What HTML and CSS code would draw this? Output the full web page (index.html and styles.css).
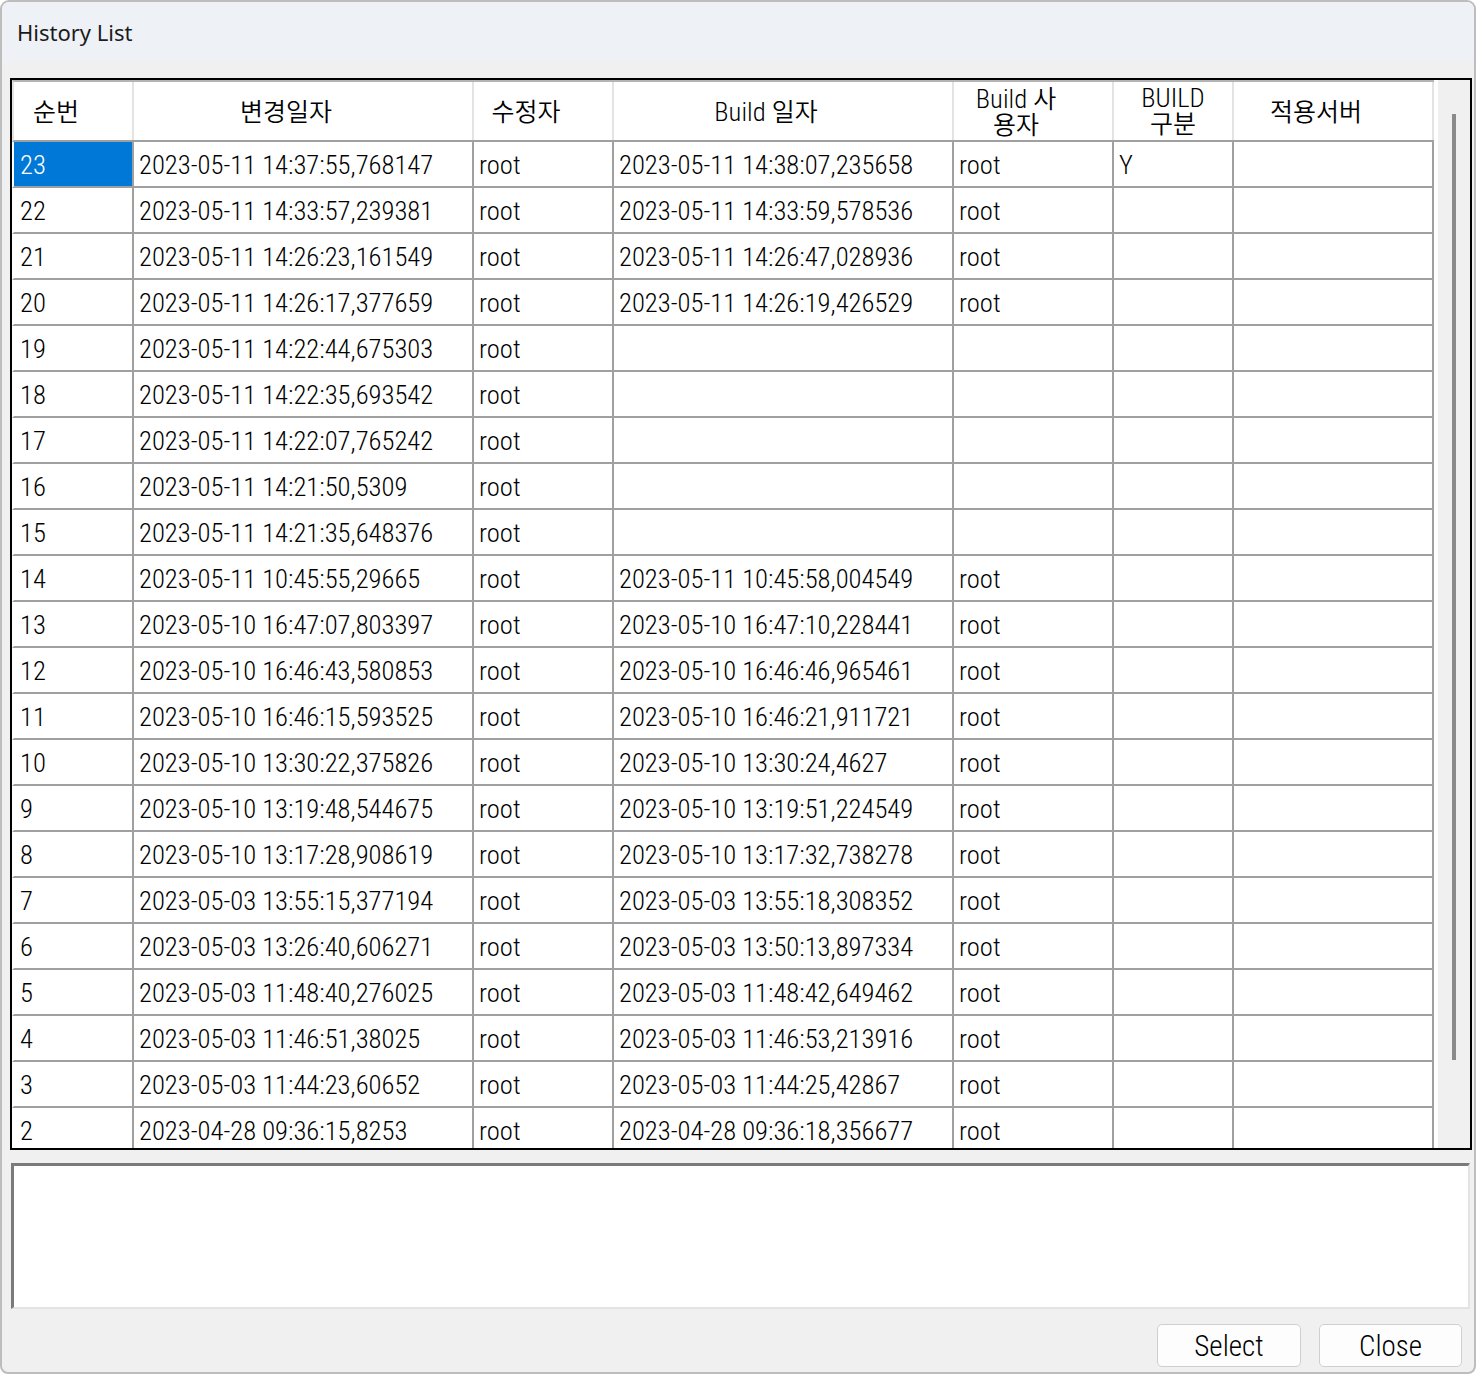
FILE: index.html
```html
<!DOCTYPE html>
<html lang="ko">
<head>
<meta charset="utf-8">
<title>History List</title>
<link rel="stylesheet" href="styles.css">
</head>
<body>
<div class="window">
  <div class="titlebar">History List</div>
  <div class="content">
    <div class="frame">
      <div class="grid">
        <div class="head">
          <div class="hc"><span class="ht"><span class="ko">순번</span></span></div>
          <div class="hc"><span class="ht"><span class="ko">변경일자</span></span></div>
          <div class="hc"><span class="ht"><span class="ko">수정자</span></span></div>
          <div class="hc"><span class="ht">Build <span class="ko">일자</span></span></div>
          <div class="hc"><span class="ht">Build <span class="ko">사</span><br><span class="ko">용자</span></span></div>
          <div class="hc hc-center"><span class="ht">BUILD<br><span class="ko">구분</span></span></div>
          <div class="hc"><span class="ht"><span class="ko">적용서버</span></span></div>
        </div>
        <div class="body">
          <div class="row"><div class="cell c1 sel">23</div><div class="cell">2023-05-11 14:37:55,768147</div><div class="cell">root</div><div class="cell">2023-05-11 14:38:07,235658</div><div class="cell">root</div><div class="cell">Y</div><div class="cell"></div></div>
          <div class="row"><div class="cell c1">22</div><div class="cell">2023-05-11 14:33:57,239381</div><div class="cell">root</div><div class="cell">2023-05-11 14:33:59,578536</div><div class="cell">root</div><div class="cell"></div><div class="cell"></div></div>
          <div class="row"><div class="cell c1">21</div><div class="cell">2023-05-11 14:26:23,161549</div><div class="cell">root</div><div class="cell">2023-05-11 14:26:47,028936</div><div class="cell">root</div><div class="cell"></div><div class="cell"></div></div>
          <div class="row"><div class="cell c1">20</div><div class="cell">2023-05-11 14:26:17,377659</div><div class="cell">root</div><div class="cell">2023-05-11 14:26:19,426529</div><div class="cell">root</div><div class="cell"></div><div class="cell"></div></div>
          <div class="row"><div class="cell c1">19</div><div class="cell">2023-05-11 14:22:44,675303</div><div class="cell">root</div><div class="cell"></div><div class="cell"></div><div class="cell"></div><div class="cell"></div></div>
          <div class="row"><div class="cell c1">18</div><div class="cell">2023-05-11 14:22:35,693542</div><div class="cell">root</div><div class="cell"></div><div class="cell"></div><div class="cell"></div><div class="cell"></div></div>
          <div class="row"><div class="cell c1">17</div><div class="cell">2023-05-11 14:22:07,765242</div><div class="cell">root</div><div class="cell"></div><div class="cell"></div><div class="cell"></div><div class="cell"></div></div>
          <div class="row"><div class="cell c1">16</div><div class="cell">2023-05-11 14:21:50,5309</div><div class="cell">root</div><div class="cell"></div><div class="cell"></div><div class="cell"></div><div class="cell"></div></div>
          <div class="row"><div class="cell c1">15</div><div class="cell">2023-05-11 14:21:35,648376</div><div class="cell">root</div><div class="cell"></div><div class="cell"></div><div class="cell"></div><div class="cell"></div></div>
          <div class="row"><div class="cell c1">14</div><div class="cell">2023-05-11 10:45:55,29665</div><div class="cell">root</div><div class="cell">2023-05-11 10:45:58,004549</div><div class="cell">root</div><div class="cell"></div><div class="cell"></div></div>
          <div class="row"><div class="cell c1">13</div><div class="cell">2023-05-10 16:47:07,803397</div><div class="cell">root</div><div class="cell">2023-05-10 16:47:10,228441</div><div class="cell">root</div><div class="cell"></div><div class="cell"></div></div>
          <div class="row"><div class="cell c1">12</div><div class="cell">2023-05-10 16:46:43,580853</div><div class="cell">root</div><div class="cell">2023-05-10 16:46:46,965461</div><div class="cell">root</div><div class="cell"></div><div class="cell"></div></div>
          <div class="row"><div class="cell c1">11</div><div class="cell">2023-05-10 16:46:15,593525</div><div class="cell">root</div><div class="cell">2023-05-10 16:46:21,911721</div><div class="cell">root</div><div class="cell"></div><div class="cell"></div></div>
          <div class="row"><div class="cell c1">10</div><div class="cell">2023-05-10 13:30:22,375826</div><div class="cell">root</div><div class="cell">2023-05-10 13:30:24,4627</div><div class="cell">root</div><div class="cell"></div><div class="cell"></div></div>
          <div class="row"><div class="cell c1">9</div><div class="cell">2023-05-10 13:19:48,544675</div><div class="cell">root</div><div class="cell">2023-05-10 13:19:51,224549</div><div class="cell">root</div><div class="cell"></div><div class="cell"></div></div>
          <div class="row"><div class="cell c1">8</div><div class="cell">2023-05-10 13:17:28,908619</div><div class="cell">root</div><div class="cell">2023-05-10 13:17:32,738278</div><div class="cell">root</div><div class="cell"></div><div class="cell"></div></div>
          <div class="row"><div class="cell c1">7</div><div class="cell">2023-05-03 13:55:15,377194</div><div class="cell">root</div><div class="cell">2023-05-03 13:55:18,308352</div><div class="cell">root</div><div class="cell"></div><div class="cell"></div></div>
          <div class="row"><div class="cell c1">6</div><div class="cell">2023-05-03 13:26:40,606271</div><div class="cell">root</div><div class="cell">2023-05-03 13:50:13,897334</div><div class="cell">root</div><div class="cell"></div><div class="cell"></div></div>
          <div class="row"><div class="cell c1">5</div><div class="cell">2023-05-03 11:48:40,276025</div><div class="cell">root</div><div class="cell">2023-05-03 11:48:42,649462</div><div class="cell">root</div><div class="cell"></div><div class="cell"></div></div>
          <div class="row"><div class="cell c1">4</div><div class="cell">2023-05-03 11:46:51,38025</div><div class="cell">root</div><div class="cell">2023-05-03 11:46:53,213916</div><div class="cell">root</div><div class="cell"></div><div class="cell"></div></div>
          <div class="row"><div class="cell c1">3</div><div class="cell">2023-05-03 11:44:23,60652</div><div class="cell">root</div><div class="cell">2023-05-03 11:44:25,42867</div><div class="cell">root</div><div class="cell"></div><div class="cell"></div></div>
          <div class="row"><div class="cell c1">2</div><div class="cell">2023-04-28 09:36:15,8253</div><div class="cell">root</div><div class="cell">2023-04-28 09:36:18,356677</div><div class="cell">root</div><div class="cell"></div><div class="cell"></div></div>
        </div>
      </div>
      <div class="gap"></div>
      <div class="track"><div class="thumb"></div></div>
    </div>
    <div class="memo"></div>
    <div class="buttons">
      <button class="btn btn-select">Select</button>
      <button class="btn btn-close">Close</button>
    </div>
  </div>
</div>
</body>
</html>
```

FILE: styles.css
```css
* { box-sizing: border-box; }
html, body { margin: 0; padding: 0; background: #ffffff; }
body { width: 1476px; height: 1374px; overflow: hidden; }

.window {
  width: 1476px;
  height: 1374px;
  border: 2px solid #bdbdbd;
  border-radius: 9px 9px 8px 8px;
  background: #f0f0f0;
  overflow: hidden;
  display: flex;
  flex-direction: column;
}

.titlebar {
  height: 60px;
  flex: none;
  background: #eef2f7;
  padding-left: 15px;
  font-family: "Noto Sans", sans-serif;
  font-size: 22px;
  line-height: 60px;
  color: #1b1b1b;
}

.content {
  flex: 1;
  display: flex;
  flex-direction: column;
  padding: 16px 2px 0 8px;
}

.frame {
  height: 1072px;
  flex: none;
  border: 2px solid #000;
  display: flex;
  background: #fff;
}

.grid {
  width: 1422px;
  flex: none;
  overflow: hidden;
  font-family: "Roboto", "Noto Sans CJK KR", sans-serif;
  font-stretch: 75%;
  font-weight: 350;
  font-size: 26.6px;
  color: #000;
}

.gap { width: 4px; flex: none; background: #fff; }

.track {
  width: 32px;
  flex: none;
  background: #f0f0f0;
  padding: 34px 0 0 14px;
}
.thumb { width: 4px; height: 946px; background: #8a8a8a; }

.head, .row {
  display: grid;
  grid-template-columns: 120px 340px 140px 340px 160px 120px 200px;
}

.head {
  height: 62px;
  border-top: 2px solid #b4b4b4;
  border-bottom: 2px solid #a0a0a0;
  border-left: 2px solid #e3e3e3;
}

.hc {
  border-right: 2px solid #e3e3e3;
  display: flex;
  align-items: center;
  justify-content: center;
  text-align: center;
  padding-right: 34px;
  line-height: 24px;
}
.hc-center { padding-right: 0; }
.ht { display: block; }

.ko {
  font-family: "Noto Sans CJK KR", sans-serif;
  font-stretch: normal;
  font-weight: 350;
  font-size: 25px;
}

.row {
  height: 46px;
  border-bottom: 2px solid #a0a0a0;
  border-left: 2px solid #ffffff;
}

.cell {
  border-right: 2px solid #a0a0a0;
  padding-left: 5px;
  display: flex;
  align-items: center;
  white-space: nowrap;
  overflow: hidden;
}
.c1 { padding-left: 6px; }
.sel { background: #0078d7; color: #ffffff; }

.memo {
  flex: none;
  margin-top: 13px;
  margin-left: 1px;
  width: 1459px;
  height: 146px;
  background: #fff;
  border-style: solid;
  border-width: 3px 2px 2px 3px;
  border-color: #7a7a7a #e3e3e3 #e3e3e3 #7a7a7a;
}

.buttons {
  flex: none;
  margin-top: 15px;
  display: flex;
  justify-content: flex-end;
  gap: 18px;
  padding-right: 10px;
}

.btn {
  height: 43px;
  border: 1px solid #cfcfcf;
  border-radius: 5px;
  background: #fdfdfd;
  padding: 0;
  font-family: "Roboto", sans-serif;
  font-stretch: 75%;
  font-weight: 350;
  font-size: 29px;
  color: #000;
}
.btn-select { width: 144px; }
.btn-close { width: 143px; }
```
